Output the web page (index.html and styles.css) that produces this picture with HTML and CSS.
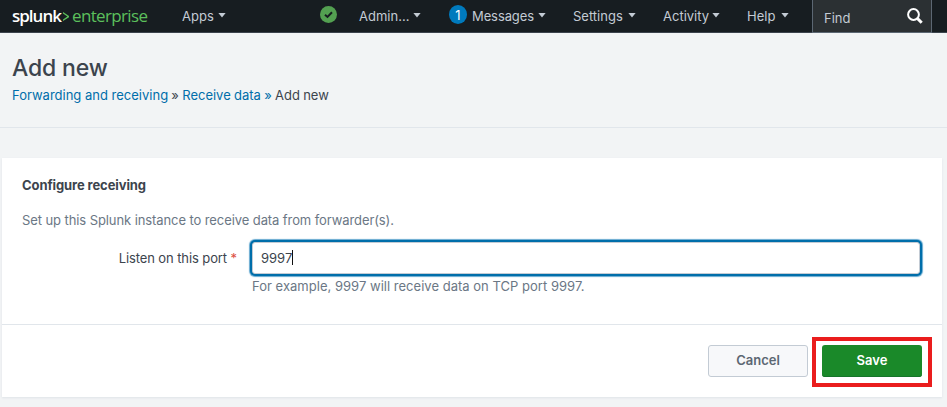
FILE: index.html
```html
<!DOCTYPE html>
<html lang="en">
<head>
<meta charset="utf-8">
<title>Add new | Splunk</title>
<link rel="stylesheet" href="styles.css">
</head>
<body>
<header class="topbar">
  <a class="brand"><span class="brand-name">splunk</span><svg class="brand-mark" viewBox="0 0 7 11"><path d="M.5 1 6.500 4.900v1.300L.5 10V8.500L4.900 5.600.5 2.600z"/></svg><span class="brand-product">enterprise</span></a>
  <nav class="nav">
    <a class="item apps">Apps<i class="caret"></i></a>
    <svg class="health" viewBox="0 0 17 17"><circle cx="8.500" cy="8.500" r="8.500"/><path d="m5 8.700 2.500 2.200L12 6.300"/></svg>
    <a class="item admin">Admin...<i class="caret"></i></a>
    <a class="item messages"><span class="count">1</span><span class="label">Messages</span><i class="caret"></i></a>
    <a class="item settings">Settings<i class="caret"></i></a>
    <a class="item activity">Activity<i class="caret"></i></a>
    <a class="item help">Help<i class="caret"></i></a>
  </nav>
  <div class="find"><span>Find</span><svg class="lens" viewBox="0 0 16 16"><circle cx="6.500" cy="6.500" r="5.400"/><path d="m10.500 10.500 4.200 4.300"/></svg></div>
</header>
<section class="heading">
  <h1>Add new</h1>
  <div class="crumbs"><a>Forwarding and receiving</a> » <a>Receive data</a> <a>»</a> Add new</div>
</section>
<main class="panel">
  <div class="fields">
    <h2>Configure receiving</h2>
    <p class="intro">Set up this Splunk instance to receive data from forwarder(s).</p>
    <div class="row">
      <label>Listen on this port <span class="required">*</span></label>
      <div class="input"><span>9997</span><i class="cursor"></i></div>
    </div>
    <p class="hint">For example, 9997 will receive data on TCP port 9997.</p>
  </div>
  <footer class="actions">
    <button class="cancel">Cancel</button>
    <div class="highlight"><button class="save">Save</button></div>
  </footer>
</main>
</body>
</html>
```
FILE: styles.css
```css
* { box-sizing: border-box; }
body { margin: 0; height: 407px; overflow: hidden; background: #f2f4f5; color: #3c444d; font: 13px/20px Inter, sans-serif; }
h1, h2, p { margin: 0; }
.topbar { display: flex; height: 33px; background: #171d21; border-bottom: 1px solid #3c444d; color: #c3cbd4; }
.brand { display: flex; align-items: center; width: 170px; padding-left: 12px; height: 31px; font: 17px/30px "Open Sans", sans-serif; }
.brand-name { width: 50px; color: #fff; font-weight: 600; letter-spacing: -1px; }
.brand-mark { width: 8px; height: 11px; margin: 2px 2px 0 0; fill: #5cc05c; }
.brand-product { color: #5cc05c; letter-spacing: -.65px; }
.nav { display: flex; align-items: center; width: 642px; height: 31px; padding-left: 12px; }
.item { display: flex; align-items: center; justify-content: space-between; flex: none; height: 20px; line-height: 18px; white-space: nowrap; }
.caret { width: 8px; height: 5px; margin-top: -1px; background: #c3cbd4; clip-path: polygon(0 0, 100% 0, 50% 100%); }
.apps { width: 44px; }
.health { width: 17px; height: 17px; margin: -3px 22px 0 94px; fill: #53a051; }
.health path { fill: none; stroke: #171d21; stroke-width: 2; }
.admin { width: 62px; }
.messages { width: 97px; margin-left: 28px; }
.count { width: 18px; height: 19px; margin-top: -3px; border-radius: 50%; background: #007abd; color: #fff; text-align: center; line-height: 20px; }
.label { margin-left: 5px; margin-right: auto; letter-spacing: -.1px; }
.settings { width: 63px; margin-left: 27px; }
.activity { width: 57px; margin-left: 27px; }
.help { width: 42px; margin-left: 27px; }
.find { display: flex; justify-content: space-between; width: 120px; height: 33px; padding: 8px 8px 0 11px; background: #2b3033; border: 1px solid #5c6773; border-top: 0; }
.lens { width: 16px; height: 16px; fill: none; stroke: #fff; stroke-width: 2; }
.lens path { stroke-width: 3; }
.heading { height: 95px; padding: 20px 12px 0; border-bottom: 1px solid #e1e6eb; }
h1 { font-size: 23px; line-height: 30px; font-weight: 500; letter-spacing: -.15px; }
.crumbs { margin-top: 2px; word-spacing: -.4px; }
.crumbs a { color: #006eaa; }
.crumbs a:first-child { word-spacing: 0; }
.panel { width: 940px; height: 239px; margin: 30px 0 0 2px; background: #fff; box-shadow: 0 1px 2px #dfe3e8; }
.fields { height: 167px; padding: 17px 20px 0; border-bottom: 1px solid #e1e6eb; }
h2 { font-size: 13px; line-height: 20px; font-weight: 700; letter-spacing: -.1px; }
.intro { margin-top: 15px; color: #6b7785; letter-spacing: -.09px; }
.row { display: flex; align-items: center; margin-top: 12px; }
label { width: 230px; padding-right: 15px; text-align: right; letter-spacing: -.1px; }
.required { color: #dc4e41; }
.input { display: flex; align-items: center; width: 668px; height: 32px; padding: 0 0 1px 8px; background: #fff; border: 1px solid #c3cbd4; border-radius: 3px; box-shadow: 0 0 0 2px #006eaa, 0 0 1px 3px #65a9d0; }
.cursor { width: 1px; height: 15px; background: #111; }
.hint { margin: 2px 0 0 230px; color: #6b7785; letter-spacing: .02px; }
.actions { display: flex; justify-content: flex-end; padding: 12px 10px 0 0; }
button { width: 100px; height: 32px; padding: 0 0 2px; border-radius: 3px; font: 600 13px/20px Inter, sans-serif; }
.cancel { margin: 8px 4px 0 0; border: 1px solid #c3cbd4; background: #f7f8fa; color: #5c6773; }
.highlight { width: 120px; height: 50px; padding: 4px 6px; border: 4px solid #ea1d1d; }
.save { border: 0; background: #1a8929; color: #fff; box-shadow: inset 0 -1px #16752a; }
```
